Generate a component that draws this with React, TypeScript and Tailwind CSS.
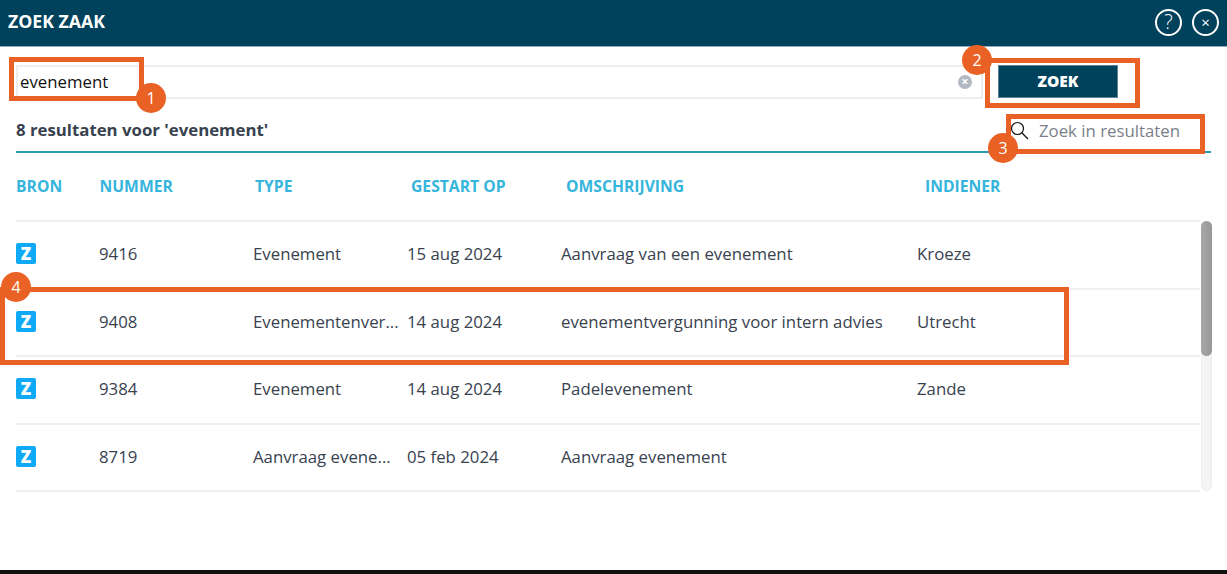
const rows = [
  { nummer: "9416", type: "Evenement", datum: "15 aug 2024", tekst: "Aanvraag van een evenement", indiener: "Kroeze" },
  { nummer: "9408", type: "Evenementenver...", datum: "14 aug 2024", tekst: "evenementvergunning voor intern advies", indiener: "Utrecht" },
  { nummer: "9384", type: "Evenement", datum: "14 aug 2024", tekst: "Padelevenement", indiener: "Zande" },
  { nummer: "8719", type: "Aanvraag evene...", datum: "05 feb 2024", tekst: "Aanvraag evenement", indiener: "" },
];

function Badge({ n, className }: { n: number; className: string }) {
  return (
    <div className={`absolute flex h-[30px] w-[30px] items-center justify-center rounded-full bg-[#e96124] text-[16px] text-white ${className}`}>
      {n}
    </div>
  );
}

function ZIcon() {
  return (
    <div className="flex h-[21px] w-[20px] items-center justify-center rounded-[2px] bg-[#0fa9f5] text-[17px] font-extrabold leading-none text-white">
      Z
    </div>
  );
}

export default function App() {
  return (
    <div className="relative flex h-[574px] w-[1227px] flex-col overflow-hidden bg-white font-['Open_Sans',sans-serif] text-[#38424f]">
      <div className="flex h-[47px] items-center justify-between border-b border-[#8fa9b8] bg-[#00415c] pb-[2px] pl-[8px] pr-[8px]">
        <span className="-mt-[1px] text-[17.7px] font-bold text-white">ZOEK ZAAK</span>
        <div className="flex items-center gap-[10px]">
          <div className="flex h-[27px] w-[27px] items-center justify-center rounded-full border-2 border-white text-[20px] font-light text-white">?</div>
          <div className="flex h-[27px] w-[27px] items-center justify-center rounded-full border-2 border-white text-[15px] text-white">×</div>
        </div>
      </div>

      <div className="flex items-start pl-[16px] pt-[18px]">
        <div className="flex h-[34px] w-[967px] items-center justify-between border-2 border-[#eeeeee] pl-[2px] pr-[9px] text-[16.8px] text-[#111111]">
          <span>evenement</span>
          <div className="flex h-[14px] w-[14px] items-center justify-center rounded-full bg-[#b4bac4] text-[12px] font-bold leading-none text-white">×</div>
        </div>
        <button className="ml-[15px] h-[33px] w-[120px] border border-[#5d8496] bg-[#00415c] text-[15.5px] font-extrabold text-white">ZOEK</button>
      </div>

      <div className="mx-[16px] mt-[13px] flex h-[41px] items-start justify-between border-b-2 border-[#2a9ab5]">
        <span className="pt-[5px] text-[16.8px] font-bold">8 resultaten voor 'evenement'</span>
        <div className="flex items-center pr-[31px] pt-[6px] text-[16.8px] text-[#7a808a]">
          <svg width="20" height="20" viewBox="0 0 20 20" fill="none" stroke="#111111" strokeWidth="1.2" className="mr-[9px]">
            <circle cx="7.5" cy="7.5" r="6" />
            <path d="M12 12l6 6" />
          </svg>
          Zoek in resultaten
        </div>
      </div>

      <div className="flex h-[67px] items-center pl-[16px] text-[15.7px] font-bold text-[#35b5dc]">
        <span className="w-[83.5px]">BRON</span>
        <span className="w-[155.5px]">NUMMER</span>
        <span className="w-[156px]">TYPE</span>
        <span className="w-[155px]">GESTART OP</span>
        <span className="w-[359px]">OMSCHRIJVING</span>
        <span>INDIENER</span>
      </div>

      <div className="relative ml-[16px] w-[1196px]">
        <div className="w-[1184px] border-t-2 border-[#f0f0f0]">
          {rows.map((r) => (
            <div key={r.nummer} className="flex h-[67.5px] items-center border-b-2 border-[#f0f0f0] pb-[2px] text-[16.8px]">
              <div className="w-[83px]"><ZIcon /></div>
              <span className="w-[154px]">{r.nummer}</span>
              <span className="w-[154px]">{r.type}</span>
              <span className="w-[154px]">{r.datum}</span>
              <span className="w-[356px]">{r.tekst}</span>
              <span>{r.indiener}</span>
            </div>
          ))}
        </div>
        <div className="absolute right-0 top-[1px] h-[270px] w-[11px] rounded-full border border-[#eeeeee] bg-[#f4f4f4]">
          <div className="-m-px h-[135px] w-[11px] rounded-full bg-gradient-to-r from-[#a8a8a8] to-[#989898]" />
        </div>
      </div>

      <div className="absolute bottom-0 left-0 h-[4px] w-full bg-[#111111]" />

      <div className="absolute left-[9px] top-[57px] h-[44px] w-[135px] border-[5px] border-[#e96124]" />
      <div className="absolute left-[985px] top-[58px] h-[50px] w-[155px] border-[5px] border-[#e96124]" />
      <div className="absolute left-[1006px] top-[114px] h-[40px] w-[199px] border-[5px] border-[#e96124]" />
      <div className="absolute left-0 top-[287px] h-[78px] w-[1069px] border-[5px] border-[#e96124]" />
      <Badge n={1} className="left-[136px] top-[83px]" />
      <Badge n={2} className="left-[962px] top-[45px]" />
      <Badge n={3} className="left-[988px] top-[133px]" />
      <Badge n={4} className="left-[1px] top-[272px]" />
    </div>
  );
}
